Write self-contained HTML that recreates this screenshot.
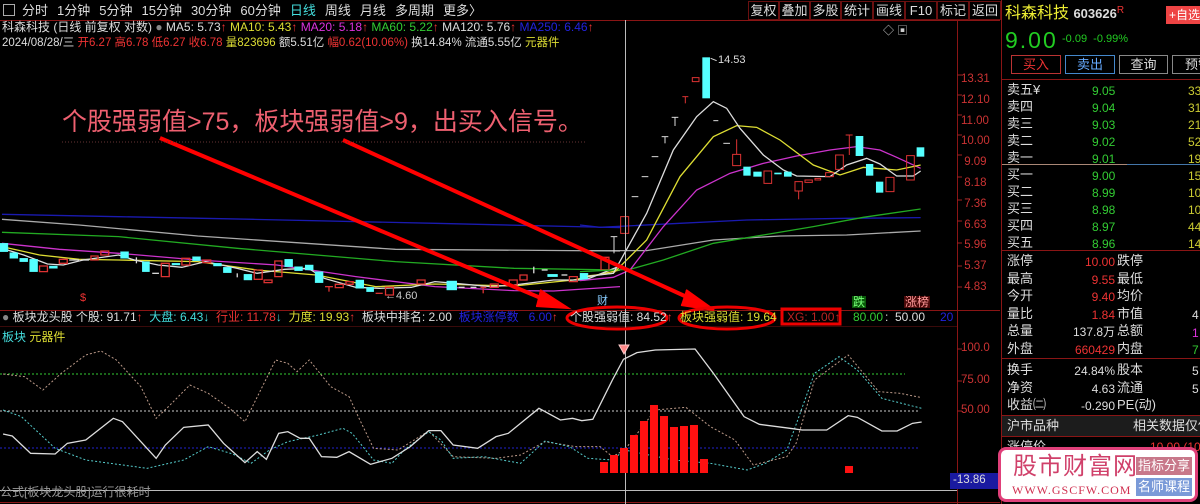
<!DOCTYPE html>
<html><head><meta charset="utf-8"><style>
*{margin:0;padding:0;box-sizing:border-box}
body{width:1200px;height:504px;background:#000;overflow:hidden;position:relative;font-family:"Liberation Sans","Noto Sans CJK SC",sans-serif;font-size:12px;color:#ddd}
.a{position:absolute;white-space:nowrap;line-height:1}
.tb span{margin-right:9px}
.btn{position:absolute;top:1px;height:19px;border:1px solid #6a1010;color:#ddd;font-size:13px;text-align:center;line-height:17px}
.r{color:#e33}.g{color:#3c3}.y{color:#dd3}.c{color:#4dd}.w{color:#ddd}.m{color:#d3d}.b{color:#22d}
</style></head><body>
<svg width="1200" height="504" style="position:absolute;left:0;top:0">
<line x1="0" y1="20.5" x2="1000" y2="20.5" stroke="#8a1515"/>
<line x1="957.5" y1="20" x2="957.5" y2="504" stroke="#8a1515"/>
<line x1="1001.5" y1="0" x2="1001.5" y2="504" stroke="#8a1515"/>
<line x1="0" y1="310.5" x2="1000" y2="310.5" stroke="#8a1515"/>
<line x1="0" y1="326.5" x2="957" y2="326.5" stroke="#3a0a0a"/>
<line x1="0" y1="502.5" x2="1000" y2="502.5" stroke="#8a1515"/>
<g stroke="#a02020">
<line x1="957" y1="75" x2="962" y2="75"/><line x1="957" y1="95" x2="962" y2="95"/><line x1="957" y1="115" x2="962" y2="115"/><line x1="957" y1="135" x2="962" y2="135"/><line x1="957" y1="155" x2="962" y2="155"/><line x1="957" y1="177" x2="962" y2="177"/><line x1="957" y1="200" x2="962" y2="200"/><line x1="957" y1="221" x2="962" y2="221"/><line x1="957" y1="243" x2="962" y2="243"/><line x1="957" y1="266" x2="962" y2="266"/><line x1="957" y1="287" x2="962" y2="287"/>
<line x1="957" y1="349" x2="962" y2="349"/><line x1="957" y1="381" x2="962" y2="381"/><line x1="957" y1="411" x2="962" y2="411"/>
</g>
<g transform="translate(0,180) scale(0.3954,0.3333)" fill="none" stroke-width="1.3">
<polyline vector-effect="non-scaling-stroke" stroke="#1a1ab0" points="5,103 300,110 640,118 1100,130 1568,143"/>
<polyline vector-effect="non-scaling-stroke" stroke="#aaa" points="5,118 200,135 500,168 1000,208 1568,213"/>
<polyline vector-effect="non-scaling-stroke" stroke="#2a2" points="5,157 300,170 600,205 1000,245 1300,265 1568,270"/>
<polyline vector-effect="non-scaling-stroke" stroke="#c3c" points="5,190 150,208 300,220 500,240 700,255 900,290 1100,320 1300,332 1400,333 1568,320"/>
<polyline vector-effect="non-scaling-stroke" stroke="#dd3" points="5,200 100,225 200,238 300,240 500,245 650,270 800,285 950,320 1100,312 1300,318 1450,300 1568,270"/>
<polyline vector-effect="non-scaling-stroke" stroke="#ddd" points="5,205 60,225 120,252 160,255 210,240 300,225 340,240 400,255 460,262 520,245 600,265 650,280 720,268 780,265 820,295 900,322 960,325 1040,322 1100,305 1150,310 1240,320 1300,315 1400,300 1480,300 1568,258"/>
<g fill="#5ff" stroke="#5ff">
<rect x="0" y="190" width="20" height="25"/><rect x="25" y="218" width="20" height="17"/><rect x="50" y="235" width="20" height="10"/><rect x="75" y="238" width="20" height="37"/><rect x="125" y="258" width="20" height="7"/><rect x="305" y="215" width="20" height="20"/><rect x="360" y="245" width="18" height="30"/><rect x="435" y="250" width="20" height="5"/><rect x="487" y="230" width="20" height="12"/><rect x="540" y="250" width="20" height="8"/><rect x="565" y="262" width="20" height="16"/><rect x="617" y="283" width="20" height="17"/><rect x="720" y="238" width="20" height="22"/><rect x="745" y="260" width="20" height="12"/><rect x="772" y="255" width="20" height="15"/><rect x="797" y="275" width="20" height="33"/><rect x="900" y="300" width="20" height="25"/><rect x="927" y="322" width="18" height="13"/><rect x="1130" y="303" width="25" height="27"/><rect x="1385" y="283" width="25" height="7"/><rect x="1467" y="280" width="20" height="20"/>
</g>
<g fill="none" stroke="#d33">
<rect vector-effect="non-scaling-stroke" x="100" y="258" width="20" height="17"/><rect vector-effect="non-scaling-stroke" x="150" y="238" width="20" height="12"/><rect vector-effect="non-scaling-stroke" x="230" y="228" width="18" height="12"/><rect vector-effect="non-scaling-stroke" x="255" y="213" width="20" height="12"/><rect vector-effect="non-scaling-stroke" x="408" y="250" width="20" height="40"/><rect vector-effect="non-scaling-stroke" x="460" y="235" width="20" height="20"/><rect vector-effect="non-scaling-stroke" x="513" y="240" width="20" height="8"/><rect vector-effect="non-scaling-stroke" x="643" y="270" width="20" height="28"/><rect vector-effect="non-scaling-stroke" x="668" y="300" width="20" height="8"/><rect vector-effect="non-scaling-stroke" x="695" y="243" width="18" height="47"/><rect vector-effect="non-scaling-stroke" x="848" y="313" width="20" height="10"/><rect vector-effect="non-scaling-stroke" x="875" y="305" width="18" height="8"/><rect vector-effect="non-scaling-stroke" x="975" y="322" width="20" height="23"/><rect vector-effect="non-scaling-stroke" x="1055" y="300" width="20" height="12"/><rect vector-effect="non-scaling-stroke" x="1240" y="312" width="20" height="10"/><rect vector-effect="non-scaling-stroke" x="1288" y="300" width="20" height="15"/><rect vector-effect="non-scaling-stroke" x="1315" y="285" width="18" height="15"/><rect vector-effect="non-scaling-stroke" x="1440" y="290" width="20" height="15"/><rect vector-effect="non-scaling-stroke" x="1520" y="232" width="20" height="38"/>
<line vector-effect="non-scaling-stroke" x1="822" y1="320" x2="842" y2="320"/><line vector-effect="non-scaling-stroke" x1="832" y1="320" x2="832" y2="335"/>
<line vector-effect="non-scaling-stroke" x1="950" y1="340" x2="968" y2="340"/><line vector-effect="non-scaling-stroke" x1="1215" y1="322" x2="1230" y2="322"/><line vector-effect="non-scaling-stroke" x1="1222" y1="322" x2="1222" y2="340"/>
</g>
<g stroke="#ddd"><line vector-effect="non-scaling-stroke" x1="175" y1="240" x2="200" y2="240"/><line vector-effect="non-scaling-stroke" x1="205" y1="240" x2="225" y2="240"/><line vector-effect="non-scaling-stroke" x1="345" y1="232" x2="345" y2="250"/><line vector-effect="non-scaling-stroke" x1="385" y1="280" x2="402" y2="280"/><line vector-effect="non-scaling-stroke" x1="600" y1="280" x2="600" y2="292"/><line vector-effect="non-scaling-stroke" x1="1160" y1="322" x2="1175" y2="322"/><line vector-effect="non-scaling-stroke" x1="1190" y1="322" x2="1205" y2="322"/><line vector-effect="non-scaling-stroke" x1="1350" y1="260" x2="1350" y2="280"/><line vector-effect="non-scaling-stroke" x1="1370" y1="270" x2="1385" y2="270"/><line vector-effect="non-scaling-stroke" x1="1420" y1="285" x2="1435" y2="285"/></g>
</g>
<g transform="translate(580,40) scale(0.3333)" fill="none">
<polyline vector-effect="non-scaling-stroke" stroke-width="1.3" stroke="#1a1ab0" points="0,555 60,562 300,550 500,540 800,535 1022,533"/>
<polyline vector-effect="non-scaling-stroke" stroke-width="1.3" stroke="#aaa" points="0,632 200,632 400,600 600,588 800,585 1022,573"/>
<polyline vector-effect="non-scaling-stroke" stroke-width="1.3" stroke="#2a2" points="0,695 150,688 250,660 400,610 550,585 700,560 850,532 1022,507"/>
<polyline vector-effect="non-scaling-stroke" stroke-width="1.3" stroke="#c3c" points="0,722 100,712 150,690 250,560 350,450 450,400 550,370 650,348 750,330 830,320 900,330 950,352 1022,385"/>
<polyline vector-effect="non-scaling-stroke" stroke-width="1.3" stroke="#dd3" points="0,710 100,700 200,600 300,410 400,290 470,257 530,262 600,300 700,375 780,405 850,382 950,390 1022,375"/>
<polyline vector-effect="non-scaling-stroke" stroke-width="1.3" stroke="#ddd" points="0,712 100,700 200,520 280,330 350,230 400,185 440,205 480,265 550,345 610,390 650,408 750,410 800,375 860,355 900,372 950,408 1000,408 1022,393"/>
<g fill="#5ff"><rect x="0" y="700" width="22" height="18"/><rect x="367" y="52" width="23" height="123"/><rect x="490" y="380" width="22" height="27"/><rect x="520" y="395" width="25" height="15"/><rect x="583" y="398" width="22" height="5"/><rect x="612" y="395" width="23" height="15"/><rect x="827" y="288" width="23" height="60"/><rect x="858" y="372" width="22" height="35"/><rect x="888" y="425" width="22" height="33"/><rect x="1010" y="322" width="23" height="28"/></g>
<g stroke="#d33">
<rect vector-effect="non-scaling-stroke" x="122" y="530" width="24" height="50"/><rect vector-effect="non-scaling-stroke" x="337" y="113" width="20" height="12"/><rect vector-effect="non-scaling-stroke" x="458" y="343" width="24" height="34"/><line vector-effect="non-scaling-stroke" x1="470" y1="298" x2="470" y2="343"/><rect vector-effect="non-scaling-stroke" x="552" y="393" width="23" height="37"/><rect vector-effect="non-scaling-stroke" x="645" y="425" width="22" height="28"/><line vector-effect="non-scaling-stroke" x1="656" y1="453" x2="656" y2="478"/><rect vector-effect="non-scaling-stroke" x="675" y="420" width="22" height="7"/><rect vector-effect="non-scaling-stroke" x="705" y="415" width="17" height="5"/><rect vector-effect="non-scaling-stroke" x="737" y="398" width="23" height="12"/><rect vector-effect="non-scaling-stroke" x="767" y="345" width="23" height="43"/><line vector-effect="non-scaling-stroke" x1="797" y1="285" x2="818" y2="285"/><line vector-effect="non-scaling-stroke" x1="808" y1="285" x2="808" y2="345"/><line vector-effect="non-scaling-stroke" x1="307" y1="170" x2="325" y2="170"/><line vector-effect="non-scaling-stroke" x1="316" y1="170" x2="316" y2="190"/><rect vector-effect="non-scaling-stroke" x="918" y="412" width="24" height="43"/><rect vector-effect="non-scaling-stroke" x="980" y="347" width="23" height="73"/>
</g>
<g stroke="#ddd"><line vector-effect="non-scaling-stroke" x1="92" y1="590" x2="112" y2="590"/><line vector-effect="non-scaling-stroke" x1="102" y1="590" x2="102" y2="640"/><line vector-effect="non-scaling-stroke" x1="275" y1="232" x2="295" y2="232"/><line vector-effect="non-scaling-stroke" x1="285" y1="232" x2="285" y2="258"/><line vector-effect="non-scaling-stroke" x1="245" y1="290" x2="265" y2="290"/><line vector-effect="non-scaling-stroke" x1="255" y1="290" x2="255" y2="310"/><line vector-effect="non-scaling-stroke" x1="215" y1="350" x2="235" y2="350"/><line vector-effect="non-scaling-stroke" x1="185" y1="410" x2="205" y2="410"/><line vector-effect="non-scaling-stroke" x1="155" y1="470" x2="175" y2="470"/><line vector-effect="non-scaling-stroke" x1="430" y1="310" x2="450" y2="310"/><line vector-effect="non-scaling-stroke" x1="400" y1="242" x2="415" y2="242"/><line vector-effect="non-scaling-stroke" x1="392" y1="55" x2="410" y2="62"/></g>
</g>
<line x1="625.5" y1="20" x2="625.5" y2="504" stroke="#bbb"/>
<line x1="0" y1="374" x2="905" y2="374" stroke="#3c3" stroke-dasharray="2,2"/>
<line x1="0" y1="411" x2="920" y2="411" stroke="#ccc" stroke-dasharray="2,2"/>
<line x1="0" y1="448" x2="920" y2="448" stroke="#22c" stroke-dasharray="2,2"/>
<line x1="0" y1="490.5" x2="957" y2="490.5" stroke="#bbb"/>
<g transform="translate(0,330) scale(0.6124,0.3333)" fill="none">
<polyline vector-effect="non-scaling-stroke" stroke="#b98" stroke-dasharray="2,2" points="5,132 40,140 70,180 100,130 140,75 165,63 190,90 215,140 230,170 255,265 275,230 310,165 340,190 375,235 400,275 450,90 470,100 485,125 505,90 540,170 570,200 585,260 610,355 650,360 700,303 740,380 810,385 850,375 890,335 940,350 980,350 1000,380 1020,360 1070,240 1120,232 1160,290 1200,330 1230,405 1285,380 1300,340 1330,150 1385,75 1435,185 1470,190 1505,203"/>
<polyline vector-effect="non-scaling-stroke" stroke="#5cc" stroke-dasharray="2,2" points="5,240 35,260 90,355 140,390 200,405 240,415 300,390 340,350 380,372 410,400 440,360 470,335 520,315 560,295 575,310 610,390 640,400 660,360 700,305 720,330 740,385 790,380 850,400 890,333 930,350 960,385 1000,390 1020,360 1100,390 1160,400 1220,420 1250,400 1285,360 1330,130 1370,80 1400,120 1440,205 1505,235"/>
<polyline vector-effect="non-scaling-stroke" stroke="#ddd" stroke-width="1.3" points="5,312 20,318 50,370 90,372 110,340 140,330 185,265 200,275 255,385 270,345 300,292 340,285 365,340 400,398 420,365 435,388 455,310 470,305 490,325 505,325 525,380 550,382 570,365 605,403 640,385 670,350 700,302 720,302 740,345 780,355 810,320 830,310 880,235 915,270 935,265 950,272 968,268 1000,150 1018,88 1040,68 1070,60 1135,57 1165,130 1215,260 1240,283 1290,295 1310,300 1350,300 1385,257 1400,262 1440,303 1465,303 1490,280 1505,276"/>
</g>
<g fill="#f11">
<rect x="600" y="462" width="8" height="11"/><rect x="610" y="455" width="8" height="18"/><rect x="620" y="448" width="8" height="25"/><rect x="630" y="435" width="8" height="38"/><rect x="640" y="421" width="8" height="52"/><rect x="650" y="405" width="8" height="68"/><rect x="660" y="416" width="8" height="57"/><rect x="670" y="427" width="8" height="46"/><rect x="680" y="426" width="8" height="47"/><rect x="690" y="425" width="8" height="48"/><rect x="700" y="459" width="8" height="14"/><rect x="845" y="466" width="8" height="7"/>
</g>
<path d="M619,345 L629,345 L624,354 Z" fill="#f88" stroke="#fcc"/>
<rect x="950" y="473" width="50" height="16" fill="#1a1aa0"/>
<g stroke="#f00" stroke-width="4" fill="none">
<line x1="160" y1="138" x2="555" y2="304"/><path d="M540,290 L568,308 L536,306" fill="#f00" stroke-width="2"/>
<line x1="343" y1="140" x2="700" y2="303"/><path d="M686,290 L714,310 L681,305" fill="#f00" stroke-width="2"/>
</g>
<g stroke="#e00" stroke-width="3" fill="none">
<ellipse cx="617" cy="318" rx="50" ry="11"/><ellipse cx="727" cy="318" rx="48" ry="11"/><rect x="782" y="309" width="58" height="15"/>
</g>
<line x1="62" y1="142" x2="585" y2="142" stroke="#633" stroke-dasharray="1,2"/>
</svg>

<div class="a" style="left:3px;top:4px;width:12px;height:12px;border:1px solid #aaa"></div>
<div class="a tb" style="left:22px;top:4px;font-size:13px;color:#ddd"><span>分时</span><span>1分钟</span><span>5分钟</span><span>15分钟</span><span>30分钟</span><span>60分钟</span><span class="c">日线</span><span>周线</span><span>月线</span><span>多周期</span><span>更多〉</span></div>
<div class="btn" style="left:748px;width:31px">复权</div><div class="btn" style="left:779px;width:31px">叠加</div><div class="btn" style="left:810px;width:31px">多股</div><div class="btn" style="left:841px;width:32px">统计</div><div class="btn" style="left:873px;width:32px">画线</div><div class="btn" style="left:905px;width:32px">F10</div><div class="btn" style="left:937px;width:32px">标记</div><div class="btn" style="left:969px;width:32px">返回</div>
<div class="a" style="left:2px;top:21px;font-size:12px">科森科技 (日线 前复权 对数) <span style="color:#888">●</span> MA5: 5.73<span class="r">↑</span> <span class="y">MA10: 5.43</span><span class="r">↑</span> <span class="m">MA20: 5.18</span><span class="r">↑</span> <span class="g">MA60: 5.22</span><span class="r">↑</span> MA120: 5.76<span class="r">↑</span> <span class="b">MA250: 6.46</span><span class="r">↑</span></div>
<div class="a" style="left:2px;top:38px;font-size:11.5px">2024/08/28/三 <span class="r">开6.27 高6.78 低6.27 收6.78</span> <span class="y">量823696</span> 额5.51亿 <span class="r">幅0.62(10.06%)</span> 换14.84% 流通5.55亿 <span class="y">元器件</span></div>
<div class="a" style="left:883px;top:26px;color:#ccc;font-size:11px">◇ ▣</div>
<div class="a" style="left:718px;top:55px;font-size:11px">14.53</div>
<div class="a" style="left:385px;top:291px;font-size:11px;color:#ccc">←4.60</div>
<div class="a r" style="left:80px;top:293px;font-size:11px">$</div>
<div class="a" style="left:597px;top:296px;font-size:11px;color:#8cf">财</div>
<div class="a" style="left:852px;top:296px;font-size:12px;background:#0a5a0a;color:#7f7;padding:0 1px">跌</div>
<div class="a" style="left:904px;top:296px;font-size:12px;background:#4a0a0a;color:#f99;padding:0 1px">涨榜</div>
<div class="a" style="left:62px;top:110px;font-size:25px;color:#ee6070">个股强弱值>75，板块强弱值>9，出买入信号。</div>
<div class="a" style="left:961px;top:69px;font-size:11.5px;line-height:20.8px;color:#c33;white-space:pre">13.31
12.10
11.00
10.00
 9.09
 8.18
 7.36
 6.63
 5.96
 5.37
 4.83</div>
<div class="a" style="left:961px;top:343px;font-size:11.5px;color:#c33">100.0</div>
<div class="a" style="left:961px;top:375px;font-size:11.5px;color:#c33">75.00</div>
<div class="a" style="left:961px;top:405px;font-size:11.5px;color:#c33">50.00</div>
<div class="a" style="left:953px;top:475px;font-size:11.5px;color:#ddd">-13.86</div>
<div class="a" style="left:2px;top:311px;font-size:12px"><span style="color:#888">●</span> 板块龙头股 个股: 91.71<span class="r">↑</span> &nbsp;<span class="c">大盘: 6.43↓</span> &nbsp;<span class="r">行业: 11.78</span><span class="c">↓</span> &nbsp;<span class="y">力度: 19.93</span><span class="r">↑</span> &nbsp;板块中排名: 2.00 &nbsp;<span class="b">板块涨停数 &nbsp;&nbsp;6.00</span><span class="r">↑</span></div>
<div class="a" style="left:570px;top:311px;font-size:12px">个股强弱值: 84.52<span class="r">↑</span></div>
<div class="a y" style="left:680px;top:311px;font-size:12px">板块强弱值: 19.64</div>
<div class="a" style="left:787px;top:311px;font-size:12px;color:#b22">XG: 1.00↑</div>
<div class="a g" style="left:853px;top:311px;font-size:12px">80.00</div>
<div class="a" style="left:885px;top:311px;font-size:12px">: &nbsp;50.00</div>
<div class="a b" style="left:940px;top:311px;font-size:12px">20</div>
<div class="a" style="left:2px;top:331px;font-size:12px"><span class="c">板块</span> <span class="y">元器件</span></div>
<div class="a" style="left:0px;top:486px;font-size:12px;color:#999">公式[板块龙头股]运行很耗时</div>
<div class="a" style="left:1005px;top:6px;font-size:16px;color:#ee3">科森科技 <span style="font-size:13px;color:#ddd;font-weight:bold">603626</span><span class="r" style="font-size:10px;vertical-align:top">R</span></div>
<div class="a" style="left:1166px;top:6px;width:40px;height:18px;background:#e44;color:#fff;font-size:12px;padding:3px 3px">+自选</div>
<div class="a" style="left:1005px;top:29px;font-size:23px;color:#2c2;letter-spacing:2px">9.00</div>
<div class="a" style="left:1062px;top:34px;font-size:11px;color:#2c2">-0.09 &nbsp;-0.99%</div>
<div class="a" style="left:1011px;top:55px;width:50px;height:19px;border:1px solid #b33;color:#e33;text-align:center;line-height:17px;font-size:13px">买入</div>
<div class="a" style="left:1065px;top:55px;width:50px;height:19px;border:1px solid #48c;color:#6af;text-align:center;line-height:17px;font-size:13px">卖出</div>
<div class="a" style="left:1119px;top:55px;width:49px;height:19px;border:1px solid #888;color:#ddd;text-align:center;line-height:17px;font-size:13px">查询</div>
<div class="a" style="left:1172px;top:55px;width:40px;height:19px;border:1px solid #888;color:#ddd;line-height:17px;font-size:13px;padding-left:12px">预警</div>
<div class="a" style="left:1002px;top:79px;width:198px;height:1px;background:#8a1515"></div>
<div class="a" style="left:1002px;top:164px;width:125px;height:1px;background:#a87"></div><div class="a" style="left:1127px;top:164px;width:73px;height:1px;background:#47a"></div>
<div class="a" style="left:1002px;top:250px;width:198px;height:1px;background:#8a1515"></div>
<div class="a" style="left:1002px;top:358px;width:198px;height:1px;background:#8a1515"></div>
<div class="a" style="left:1002px;top:415px;width:198px;height:1px;background:#8a1515"></div>
<div class="a" style="left:1002px;top:416px;width:198px;height:20px;background:#1c1c1c"></div>
<div class="a" style="left:1002px;top:436px;width:198px;height:1px;background:#8a1515"></div>
<div class="a" style="left:1007px;top:81px;font-size:13px;line-height:17px;white-space:pre;color:#ddd">卖五¥
卖四
卖三
卖二
卖一</div>
<div class="a" style="left:1092px;top:83px;font-size:12px;line-height:17px;white-space:pre;color:#3c3">9.05
9.04
9.03
9.02
9.01</div>
<div class="a" style="left:1188px;top:83px;font-size:12px;line-height:17px;white-space:pre;color:#cc3">33
31
21
52
199</div>
<div class="a" style="left:1007px;top:166px;font-size:13px;line-height:17px;white-space:pre;color:#ddd">买一
买二
买三
买四
买五</div>
<div class="a" style="left:1092px;top:168px;font-size:12px;line-height:17px;white-space:pre;color:#3c3">9.00
8.99
8.98
8.97
8.96</div>
<div class="a" style="left:1188px;top:168px;font-size:12px;line-height:17px;white-space:pre;color:#cc3">151
105
108
44
14</div>
<div class="a" style="left:1007px;top:252px;font-size:13px;line-height:17.5px;white-space:pre;color:#ddd">涨停
最高
今开
量比
总量
外盘</div>
<div class="a" style="left:1060px;top:254px;width:55px;text-align:right;font-size:12px;line-height:17.5px;white-space:pre;color:#ddd"><span class="r">10.00</span>
<span class="r">9.55</span>
<span class="r">9.40</span>
<span class="r">1.84</span>
137.8万
<span class="r">660429</span></div>
<div class="a" style="left:1117px;top:252px;font-size:13px;line-height:17.5px;white-space:pre;color:#ddd">跌停
最低
均价
市值
总额
内盘</div>
<div class="a" style="left:1192px;top:307px;font-size:12px;line-height:17.5px;white-space:pre"><span>4</span>
<span class="m">1</span>
<span class="g">7</span></div>
<div class="a" style="left:1007px;top:361px;font-size:13px;line-height:17.5px;white-space:pre;color:#ddd">换手
净资
收益㈡</div>
<div class="a" style="left:1050px;top:363px;width:65px;text-align:right;font-size:12px;line-height:17.5px;white-space:pre;color:#ddd">24.84%
4.63
-0.290</div>
<div class="a" style="left:1117px;top:361px;font-size:13px;line-height:17.5px;white-space:pre;color:#ddd">股本
流通
PE(动)</div>
<div class="a" style="left:1192px;top:363px;font-size:12px;line-height:17.5px;white-space:pre">5
5</div>
<div class="a" style="left:1007px;top:419px;font-size:13px;color:#ddd">沪市品种</div>
<div class="a" style="left:1133px;top:419px;font-size:13px;color:#ddd">相关数据仅供</div>
<div class="a" style="left:1007px;top:440px;font-size:13px;color:#ddd">涨停价</div>
<div class="a r" style="left:1150px;top:441px;font-size:12px">10.00 (10</div>
<div class="a" style="left:998px;top:447px;width:200px;height:55px;background:#fff;border:3px solid #e0407a;border-radius:8px"></div>
<div class="a" style="left:1013px;top:455px;font-size:24px;color:#d0406a;letter-spacing:1px">股市财富网</div>
<div class="a" style="left:1012px;top:484px;font-size:12px;color:#d03050;font-family:'Liberation Serif',serif;letter-spacing:1px">WWW.GSCFW.COM</div>
<div class="a" style="left:1136px;top:457px;width:56px;height:18px;background:#c8788a;color:#fff;font-size:13px;text-align:center;line-height:18px">指标分享</div>
<div class="a" style="left:1136px;top:478px;width:56px;height:18px;background:#7a9ad8;color:#fff;font-size:13px;text-align:center;line-height:18px">名师课程</div>
</body></html>
